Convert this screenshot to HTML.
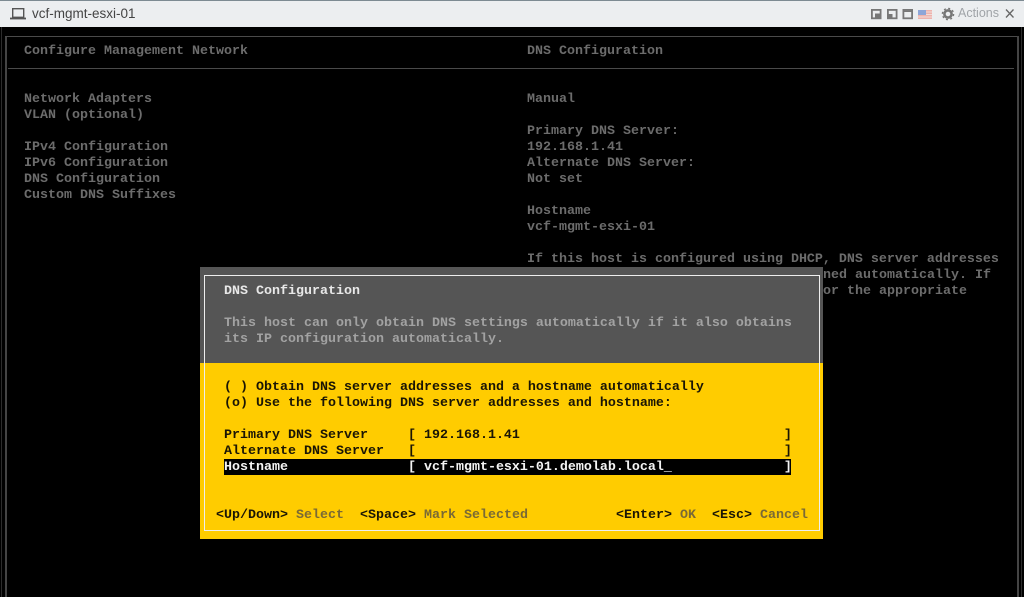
<!DOCTYPE html>
<html><head><meta charset="utf-8">
<style>
html,body{margin:0;padding:0;background:#000;}
#p{position:relative;width:1024px;height:597px;overflow:hidden;background:#000;}
.t{position:absolute;font:bold 13.33px/16px "Liberation Mono",monospace;white-space:pre;color:#6c6c6c;}
.k{color:#1a1505;}
.w{color:#e8e8e8;}
.g{color:#a2a2a2;}
.s{color:#7a6a35;}
.r{position:absolute;}
</style></head>
<body><div id="p">
<div class="r" style="left:0;top:0;width:1024px;height:27px;background:#eceef0;"></div>
<div class="r" style="left:0;top:0;width:1024px;height:1px;background:#7d8a92;"></div>
<svg class="r" style="left:0;top:0" width="1024" height="28">
<g fill="none" stroke="#555" stroke-width="1.4">
<rect x="12.7" y="8.7" width="11" height="8.6"/><path d="M10 18.5H26" stroke-width="1.8"/>
</g>
<g fill="none" stroke="#777" stroke-width="1.8">
<rect x="871.9" y="9.9" width="8.7" height="8.4"/><rect x="887.9" y="9.9" width="8.7" height="8.4"/><rect x="903.4" y="9.9" width="8.7" height="8.4"/>
<path d="M903.4 11.3H912" stroke-width="1.4"/>
</g>
<rect x="875" y="13.5" width="5" height="4.5" fill="#777"/><rect x="888" y="14" width="4.5" height="4" fill="#777"/>
<rect x="918" y="10" width="14" height="9" fill="#eeb3ae"/>
<path d="M918 12H932M918 14.5H932M918 17H932" stroke="#f3dcd8" stroke-width="1"/>
<rect x="918" y="10" width="8" height="5" fill="#8ea6d8"/>
<circle cx="948" cy="14" r="3.6" fill="none" stroke="#777" stroke-width="2.6"/>
<circle cx="948" cy="14" r="5.6" fill="none" stroke="#777" stroke-width="1.4" stroke-dasharray="2 2.4"/>
<path d="M1006 9.5L1013.5 17.5M1013.5 9.5L1006 17.5" stroke="#666" stroke-width="1.3" fill="none"/>
</svg>
<div class="r" style="left:32px;top:6px;font:13.5px/16px 'Liberation Sans',sans-serif;color:#444;">vcf-mgmt-esxi-01</div>
<div class="r" style="left:958px;top:5px;font:12.5px/16px 'Liberation Sans',sans-serif;color:#a0a4a8;">Actions</div>

<div class="r" style="left:1px;top:27px;width:1px;height:570px;background:#2c2c2c;"></div>
<div class="r" style="left:5px;top:36px;width:2px;height:561px;background:#444;"></div>
<div class="r" style="left:5px;top:36px;width:1014px;height:1px;background:#4a4a4a;"></div>
<div class="r" style="left:1017px;top:36px;width:2px;height:561px;background:#444;"></div>
<div class="r" style="left:1021px;top:27px;width:1px;height:570px;background:#2c2c2c;"></div>
<div class="r" style="left:8px;top:68px;width:1006px;height:1px;background:#4a4a4a;"></div>

<div class="t" style="left:24px;top:44px;">Configure Management Network</div>
<div class="t" style="left:527px;top:44px;">DNS Configuration</div>
<div class="t" style="left:24px;top:92px;">Network Adapters
VLAN (optional)

IPv4 Configuration
IPv6 Configuration
DNS Configuration
Custom DNS Suffixes</div>
<div class="t" style="left:527px;top:92px;">Manual

Primary DNS Server:
192.168.1.41
Alternate DNS Server:
Not set

Hostname
vcf-mgmt-esxi-01

If this host is configured using DHCP, DNS server addresses</div>
<div class="t" style="left:823px;top:268px;">ned automatically. If</div>
<div class="t" style="left:823px;top:284px;">or the appropriate</div>

<div class="r" style="left:200px;top:267px;width:623px;height:96px;background:#555;"></div>
<div class="r" style="left:200px;top:363px;width:623px;height:176px;background:#fc0;"></div>
<div class="r" style="left:204px;top:275px;width:616px;height:256px;border:1px solid #eee;box-sizing:border-box;"></div>

<div class="t w" style="left:224px;top:284px;">DNS Configuration</div>
<div class="t g" style="left:224px;top:316px;">This host can only obtain DNS settings automatically if it also obtains
its IP configuration automatically.</div>
<div class="t k" style="left:224px;top:380px;">( ) Obtain DNS server addresses and a hostname automatically
(o) Use the following DNS server addresses and hostname:</div>
<div class="t k" style="left:224px;top:428px;">Primary DNS Server     [ 192.168.1.41                                 ]
Alternate DNS Server   [                                              ]</div>
<div class="r" style="left:224px;top:459px;width:567px;height:16px;background:#000;"></div>
<div class="t w" style="left:224px;top:460px;color:#f4f4f4;">Hostname               [ vcf-mgmt-esxi-01.demolab.local_              ]</div>
<div class="t k" style="left:216px;top:508px;">&lt;Up/Down&gt; <span class="s">Select</span>  &lt;Space&gt; <span class="s">Mark Selected</span></div>
<div class="t k" style="left:616px;top:508px;">&lt;Enter&gt; <span class="s">OK</span>  &lt;Esc&gt; <span class="s">Cancel</span></div>
</div></body></html>
